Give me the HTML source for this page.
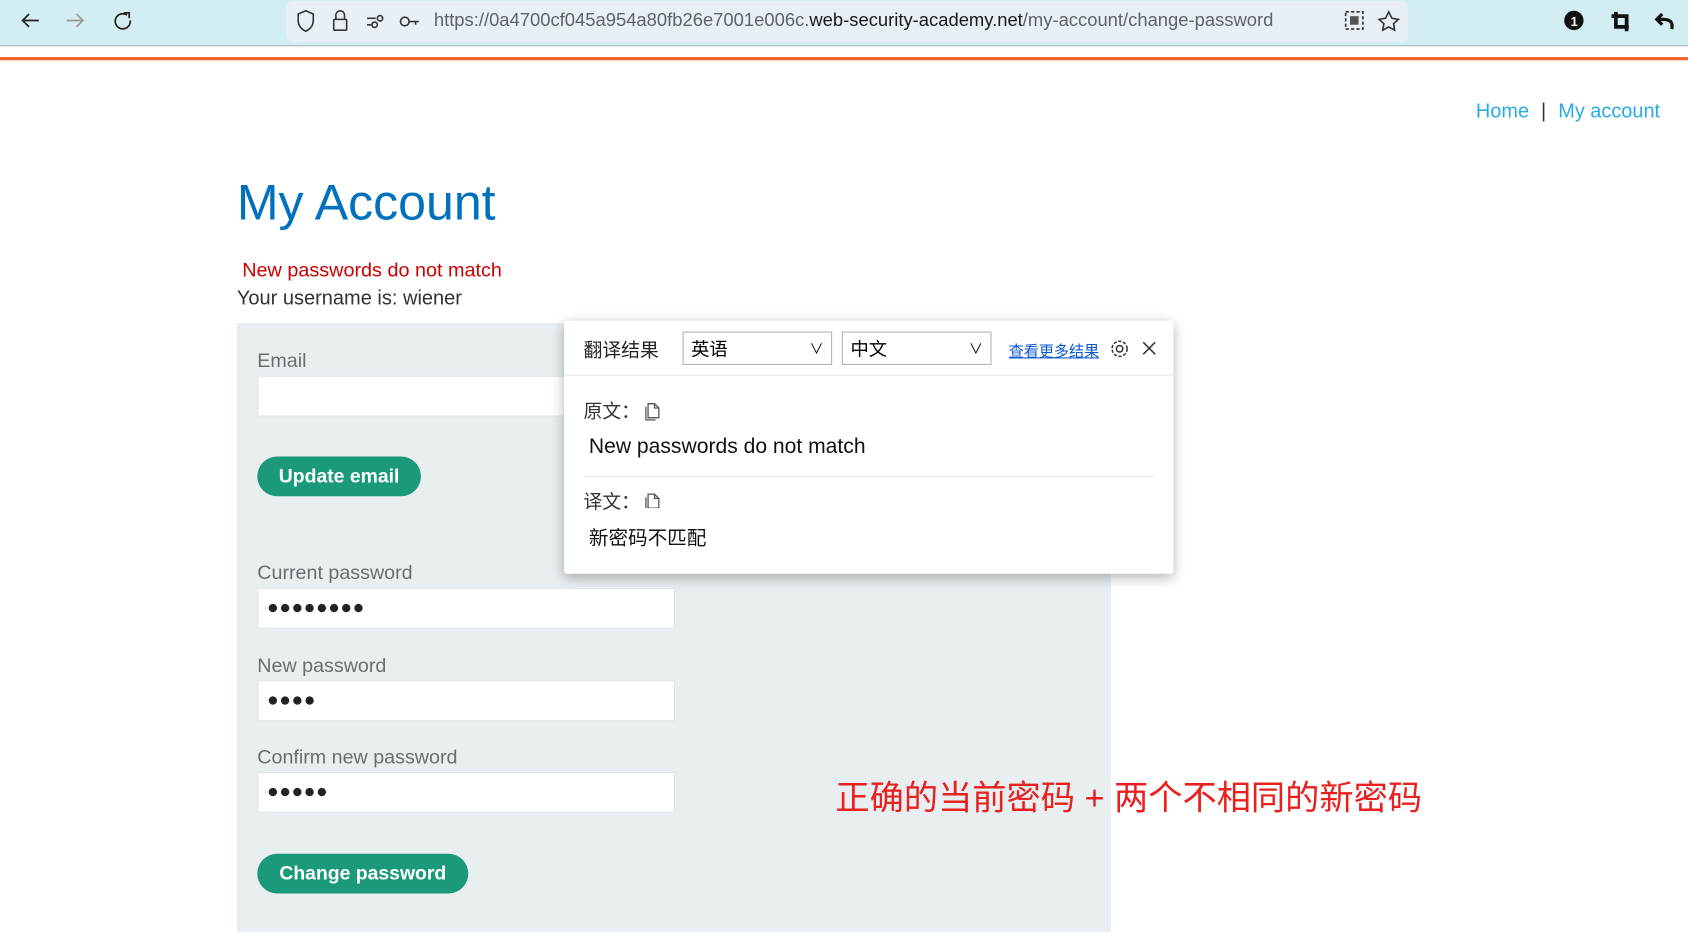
<!DOCTYPE html>
<html><head><meta charset="utf-8"><style>
html,body{margin:0;padding:0;width:1688px;height:952px;overflow:hidden;background:#fff}
#w{position:absolute;left:0;top:0;width:1568px;height:884px;transform:scale(1.07653);transform-origin:0 0;font-family:"Liberation Sans","Noto Sans CJK SC",sans-serif}
.a{position:absolute;white-space:nowrap}
.inp{position:absolute;background:#fff;border:1px solid #dfe3e6;height:36px;width:386px;left:239px}
.dots{position:absolute;left:8px;top:7px;font-size:18px;letter-spacing:0.5px;color:#222}
.btn{position:absolute;background:#1b9a7a;color:#fff;font-weight:bold;font-size:18px;border-radius:19px;text-align:center;line-height:37px;height:37px}
.lbl{position:absolute;left:239px;font-size:18.3px;color:#6a6e70}
.sel{position:absolute;top:308px;height:31px;border:1px solid #aab2bb;background:#fff;font-size:17px;line-height:31px;padding-left:7px;box-sizing:border-box;width:139px}
</style></head><body><div id="w">
<div class="a" style="left:0;top:0;width:1568px;height:42px;background:#d3eef2;border-bottom:1px solid #9fb8bd"></div>
<div class="a" style="left:266px;top:1px;width:1042px;height:38px;background:#e8f0f5;border-radius:6px"></div>
<svg class="a" style="left:16px;top:8px" width="120" height="24" fill="none" stroke-width="1.6">
<path d="M20 11H5M11 5L5 11l6 6" stroke="#222"/><path d="M61 11H46M55 5l6 6-6 6" stroke="#999"/>
<path d="M102 6a7 7 0 1 0 3 5" stroke="#222"/><path d="M99 4h5v5" stroke="#222"/></svg>
<svg class="a" style="left:274px;top:8px" width="120" height="24" fill="none" stroke="#333" stroke-width="1.5">
<path d="M10 2l7 3v6c0 5-3 8-7 10-4-2-7-5-7-10V5z"/><rect x="36" y="10" width="12" height="10" rx="1"/><path d="M38 10V6a4 4 0 0 1 8 0v4"/>
<path d="M67 9h8M67 15h4"/><circle cx="79" cy="9" r="2.5"/><circle cx="74" cy="15" r="2.5"/>
<circle cx="102" cy="12" r="4"/><path d="M106 12h9M112 12v3"/></svg>
<div class="a" style="left:403px;top:9px;font-size:17.1px;color:#5f6368">https://0a4700cf045a954a80fb26e7001e006c.<span style="color:#1a1a1a">web-security-academy.net</span>/my-account/change-password</div>
<svg class="a" style="left:1248px;top:9px" width="60" height="22" fill="none" stroke="#333" stroke-width="1.5">
<rect x="2" y="2" width="16" height="16" stroke-dasharray="3 2"/><rect x="6" y="6" width="8" height="8" fill="#555" stroke="none"/>
<path d="M42 2l3 6 6 1-4.5 4 1 6-5.5-3-5.5 3 1-6L33 9l6-1z"/></svg>
<svg class="a" style="left:1450px;top:8px" width="110" height="24">
<circle cx="12" cy="11" r="9" fill="#111"/><text x="9" y="16" fill="#fff" font-size="12" font-weight="bold" font-family="Liberation Sans">1</text>
<path d="M51 3v14h12M47 7h14v14" stroke="#111" stroke-width="3.5" fill="none"/>
<path d="M103 19c1-6-1-9-8-9h-4M94 5l-5 5 5 5" stroke="#111" stroke-width="3" fill="none"/></svg>
<div class="a" style="left:0;top:53px;width:1568px;height:3px;background:#ff6633"></div>
<div class="a" style="left:1371px;top:92px;font-size:18.5px;color:#29abe2">Home <span style="color:#333;margin:0 6px">|</span> My account</div>
<div class="a" style="left:220px;top:161px;font-size:46.5px;color:#0071bc">My Account</div>
<div class="a" style="left:225px;top:240px;font-size:18.4px;color:#c00">New passwords do not match</div>
<div class="a" style="left:220px;top:266px;font-size:18.6px;color:#333">Your username is: wiener</div>
<div class="a" style="left:220px;top:300px;width:812px;height:566px;background:#e9eef1"></div>
<div class="lbl" style="top:324px">Email</div>
<div class="inp" style="top:349px"></div>
<div class="btn" style="left:239px;top:424px;width:152px">Update email</div>
<div class="lbl" style="top:521px">Current password</div>
<div class="inp" style="top:546px"><span class="dots">●●●●●●●●</span></div>
<div class="lbl" style="top:607px">New password</div>
<div class="inp" style="top:632px"><span class="dots">●●●●</span></div>
<div class="lbl" style="top:692px">Confirm new password</div>
<div class="inp" style="top:717px"><span class="dots">●●●●●</span></div>
<div class="btn" style="left:239px;top:793px;width:196px">Change password</div>
<div class="a" style="left:776px;top:716px;font-size:31.8px;color:#e8201f">正确的当前密码 + 两个不相同的新密码</div>
<div class="a" style="left:524px;top:298px;width:566px;height:235px;background:#fff;border-radius:3px;box-shadow:0 3px 12px rgba(0,0,0,.3)"></div>
<div class="a" style="left:542px;top:312px;font-size:17.5px;color:#222">翻译结果</div>
<div class="sel" style="left:634px">英语<span style="position:absolute;right:7px;font-size:13px">∨</span></div>
<div class="sel" style="left:782px">中文<span style="position:absolute;right:7px;font-size:13px">∨</span></div>
<div class="a" style="left:937px;top:316px;font-size:14px;color:#0b57d0;text-decoration:underline">查看更多结果</div>
<svg class="a" style="left:1030px;top:314px" width="48" height="20" fill="none" stroke="#333" stroke-width="1.4">
<circle cx="10" cy="10" r="3"/><circle cx="10" cy="10" r="7" stroke-dasharray="3 1.5"/><path d="M32 4l11 11M43 4L32 15"/></svg>
<div class="a" style="left:524px;top:348px;width:566px;height:1px;background:#e6e6e6"></div>
<div class="a" style="left:542px;top:369px;font-size:17.5px;color:#333">原文：</div>
<div class="a" style="left:542px;top:453px;font-size:17.5px;color:#333">译文：</div>
<svg class="a" style="left:598px;top:372px" width="18" height="100" fill="none" stroke="#555" stroke-width="1.2">
<path d="M4 3h6l4 4v9H4zM10 3v4h4M2 6v12h9"/><path d="M4 87h6l4 4v9H4zM10 87v4h4M2 90v12h9"/></svg>
<div class="a" style="left:547px;top:404px;font-size:19.6px;color:#111">New passwords do not match</div>
<div class="a" style="left:542px;top:442px;width:530px;height:1px;background:#e6e6e6"></div>
<div class="a" style="left:547px;top:486px;font-size:18.2px;color:#111">新密码不匹配</div>
</div></body></html>
